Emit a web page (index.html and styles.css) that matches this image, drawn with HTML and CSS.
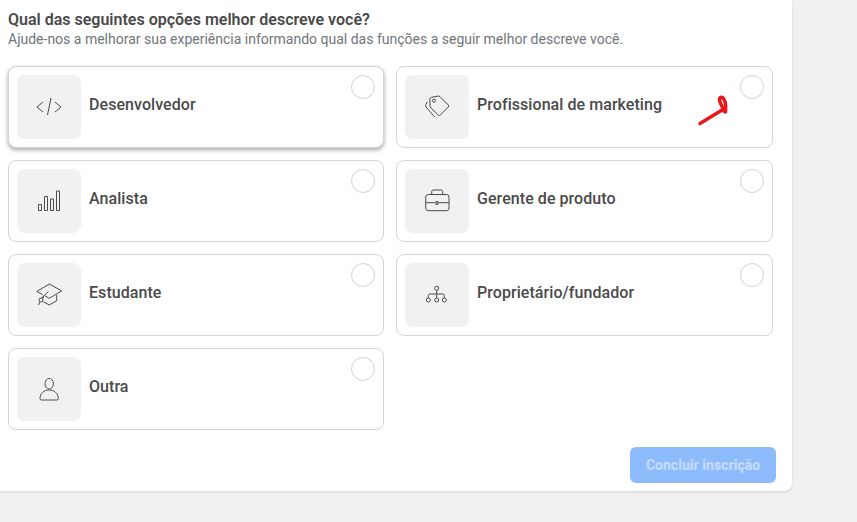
FILE: index.html
```html
<!DOCTYPE html>
<html lang="pt-BR">
<head>
<meta charset="utf-8">
<title>Qual das seguintes opções melhor descreve você?</title>
<link rel="stylesheet" href="styles.css">
</head>
<body>
<main class="panel">
  <h1 class="title">Qual das seguintes opções melhor descreve você?</h1>
  <p class="subtitle">Ajude-nos a melhorar sua experiência informando qual das funções a seguir melhor descreve você.</p>
  <div class="options">
    <div class="card card-hover">
      <div class="thumb"><svg class="icon" viewBox="0 0 32 32"><path d="M10 11l-6 5 6 5M22 11l6 5-6 5M18 7l-3.500 17"/></svg></div>
      <span class="label">Desenvolvedor</span><span class="radio"></span>
    </div>
    <div class="card">
      <div class="thumb"><svg class="icon" viewBox="0 0 32 32"><path d="M10.500 6.300l6.500-1.200q1.200-.2 2 .6l8.300 8.300q.9 1 0 1.900l-8 8.200q-1 .9-2 0l-7.400-7.300q-.8-.8-.8-1.700l-.2-6.700q0-1.700 1.600-2.100z"/><circle cx="13" cy="9.700" r="1.500"/><path d="M6.300 10.700l-1.500 3q-.6 1.300.3 2.300l7.200 8.500q.7.800 1.700 1.300"/></svg></div>
      <span class="label">Profissional de marketing</span><span class="radio"></span>
    </div>
    <div class="card">
      <div class="thumb"><svg class="icon" viewBox="0 0 32 32"><path d="M5.500 19.500h3v6h-3zM11.500 11.500h3v14h-3zM17.500 14h3v11.500h-3zM23.500 6h3v19.500h-3z"/></svg></div>
      <span class="label">Analista</span><span class="radio"></span>
    </div>
    <div class="card">
      <div class="thumb"><svg class="icon" viewBox="0 0 32 32"><path d="M10.700 9.500v-3q0-1.500 1.500-1.500h8q1.500 0 1.500 1.500v3"/><rect x="4.700" y="9.500" width="23.300" height="16.200" rx="2.500"/><path d="M4.700 17.700h10M17 17.700h11M15 16.500h1.800v3H15z"/></svg></div>
      <span class="label">Gerente de produto</span><span class="radio"></span>
    </div>
    <div class="card">
      <div class="thumb"><svg class="icon" viewBox="0 0 32 32"><path d="M16.300 5l12.400 6.900-12.400 7.400-4.300-2.400M9.500 15.500l-5.800-3L16.300 5M10.300 16.500v2.800M10.300 22.700l6 3.300 7.400-4.300V16M15.300 12.700l-6.600 6.300M6.800 23l-1.300 3"/><circle cx="8" cy="21" r="2"/></svg></div>
      <span class="label">Estudante</span><span class="radio"></span>
    </div>
    <div class="card">
      <div class="thumb"><svg class="icon" viewBox="0 0 32 32"><circle cx="15.700" cy="9.300" r="2"/><circle cx="7.300" cy="21" r="2"/><circle cx="15.700" cy="21" r="2"/><circle cx="23.300" cy="21" r="2"/><path d="M15.700 11.300V19M7.300 19v-2.500q0-1.500 1.500-1.500h13q1.500 0 1.500 1.500V19"/></svg></div>
      <span class="label">Proprietário/fundador</span><span class="radio"></span>
    </div>
    <div class="card">
      <div class="thumb"><svg class="icon" viewBox="0 0 32 32"><ellipse cx="16.200" cy="10.700" rx="4.200" ry="5.300"/><path d="M8.500 27h15.300q1.500 0 1.500-1.500c0-5-4-8.500-9.200-8.500s-9.100 3.500-9.100 8.500q0 1.500 1.500 1.500z"/></svg></div>
      <span class="label">Outra</span><span class="radio"></span>
    </div>
  </div>
  <div class="actions"><button class="submit" type="button" disabled>Concluir inscrição</button></div>
</main>
<svg class="scribble" viewBox="0 0 40 40"><path d="M4 31.500L26 18l3.500 2C30 14 30 8 26.500 5.500 23.500 4.500 23 7 24 10c1 3 2.500 6 5 8"/></svg>
</body>
</html>
```
FILE: styles.css
```css
* { box-sizing: border-box; }
html, body { margin: 0; height: 100%; }
body {
  background: #f1f1f1;
  font-family: Roboto, "Liberation Sans", sans-serif;
  overflow: hidden;
}
.panel {
  width: 792px;
  height: 491px;
  background: #fff;
  border-radius: 0 0 8px 0;
  box-shadow: 0 1px 3px rgba(0, 0, 0, .12);
  padding: 10px 16px 8px 8px;
  display: flex;
  flex-direction: column;
}
.title {
  margin: 0;
  font-size: 16px;
  line-height: 20px;
  font-weight: 600;
  color: #4a4a4a;
}
.subtitle {
  margin: 0;
  font-size: 14px;
  line-height: 18px;
  color: #70757a;
}
.options {
  margin-top: 18px;
  margin-right: 3px;
  display: grid;
  grid-template-columns: 376px 377px;
  grid-auto-rows: 82px;
  gap: 12px;
}
.card {
  position: relative;
  display: flex;
  align-items: center;
  gap: 8px;
  padding: 8px;
  background: #fff;
  border: 1px solid #d5d5d5;
  border-radius: 8px;
}
.card-hover {
  box-shadow: 0 2px 4px rgba(0, 0, 0, .35);
}
.thumb {
  flex: none;
  width: 64px;
  height: 64px;
  border-radius: 8px;
  background: #f1f1f1;
  display: flex;
  align-items: center;
  justify-content: center;
}
.icon {
  width: 32px;
  height: 32px;
  fill: none;
  stroke: #4a4a4a;
  stroke-width: 1;
}
.label {
  font-size: 16px;
  line-height: 20px;
  letter-spacing: .06px;
  font-weight: 500;
  color: #4a4a4a;
  margin-top: -5px;
}
.radio {
  position: absolute;
  top: 8px;
  right: 8px;
  width: 24px;
  height: 24px;
  border: 1px solid #d0d0d0;
  border-radius: 50%;
  background: #fff;
}
.actions {
  margin-top: 17px;
  display: flex;
  justify-content: flex-end;
}
.submit {
  width: 146px;
  height: 36px;
  border: 0;
  border-radius: 6px;
  background: #8ebbfb;
  color: #c3dbfd;
  font-family: inherit;
  font-size: 14px;
  font-weight: 800;
  padding: 0;
}
.scribble {
  position: absolute;
  left: 696px;
  top: 92px;
  width: 40px;
  height: 40px;
  fill: none;
  stroke: #e8191c;
  stroke-width: 3.500;
  stroke-linecap: round;
  stroke-linejoin: round;
}
```
